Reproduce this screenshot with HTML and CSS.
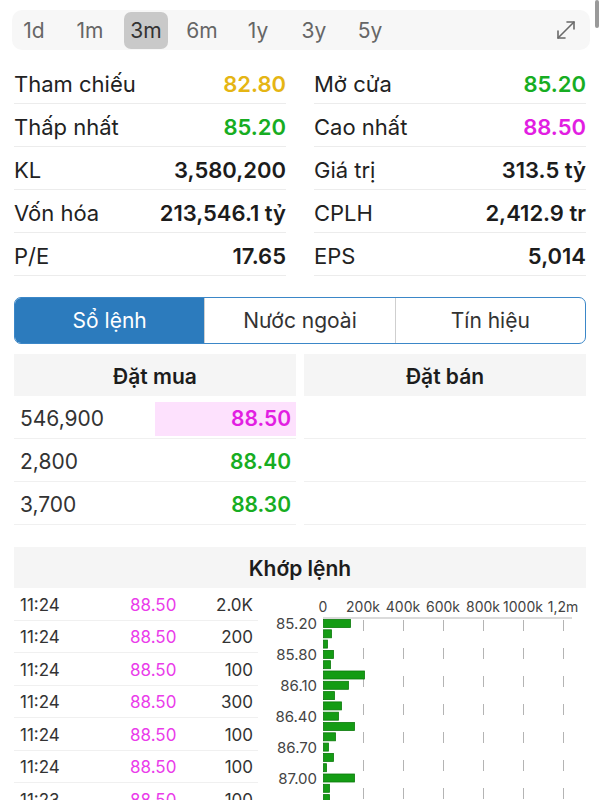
FILE: index.html
```html
<!DOCTYPE html>
<html lang="vi">
<head>
    <meta charset="UTF-8">
    <meta name="viewport" content="width=device-width, initial-scale=1.0">
    <title>Chi tiết cổ phiếu</title>
    <link rel="stylesheet" href="styles.css">
</head>
<body>

<div class="scroll-ind"></div>

<div class="range-bar">
    <span class="range">1d</span>
    <span class="range">1m</span>
    <span class="range active">3m</span>
    <span class="range">6m</span>
    <span class="range">1y</span>
    <span class="range">3y</span>
    <span class="range">5y</span>
    <svg class="expand" viewBox="0 0 24 24" fill="none" stroke="#6a6a6a" stroke-width="1.6" stroke-linecap="round" stroke-linejoin="round">
        <line x1="4" y1="20" x2="20" y2="4"/>
        <polyline points="4,13 4,20 11,20"/>
        <polyline points="13,4 20,4 20,11"/>
    </svg>
</div>

<div class="stats">
    <div class="stat"><span>Tham chiếu</span><span class="val ref">82.80</span></div>
    <div class="stat"><span>Mở cửa</span><span class="val up">85.20</span></div>
    <div class="stat"><span>Thấp nhất</span><span class="val up">85.20</span></div>
    <div class="stat"><span>Cao nhất</span><span class="val ceil">88.50</span></div>
    <div class="stat"><span>KL</span><span class="val">3,580,200</span></div>
    <div class="stat"><span>Giá trị</span><span class="val">313.5 tỷ</span></div>
    <div class="stat"><span>Vốn hóa</span><span class="val">213,546.1 tỷ</span></div>
    <div class="stat"><span>CPLH</span><span class="val">2,412.9 tr</span></div>
    <div class="stat"><span>P/E</span><span class="val">17.65</span></div>
    <div class="stat"><span>EPS</span><span class="val">5,014</span></div>
</div>

<div class="tabs">
    <div class="tab active">Sổ lệnh</div>
    <div class="tab">Nước ngoài</div>
    <div class="tab">Tín hiệu</div>
</div>

<div class="book">
    <div class="book-col">
        <div class="book-head">Đặt mua</div>
        <div class="book-row"><span class="qty">546,900</span><span class="price ceil hl">88.50</span></div>
        <div class="book-row"><span class="qty">2,800</span><span class="price up">88.40</span></div>
        <div class="book-row"><span class="qty">3,700</span><span class="price up">88.30</span></div>
    </div>
    <div class="book-col">
        <div class="book-head">Đặt bán</div>
        <div class="book-row"></div>
        <div class="book-row"></div>
        <div class="book-row"></div>
    </div>
</div>

<div class="match-head">Khớp lệnh</div>

<div class="match">
    <div class="trades">
        <div class="trade"><span class="t-time">11:24</span><span class="t-price">88.50</span><span class="t-vol">2.0K</span></div>
        <div class="trade"><span class="t-time">11:24</span><span class="t-price">88.50</span><span class="t-vol">200</span></div>
        <div class="trade"><span class="t-time">11:24</span><span class="t-price">88.50</span><span class="t-vol">100</span></div>
        <div class="trade"><span class="t-time">11:24</span><span class="t-price">88.50</span><span class="t-vol">300</span></div>
        <div class="trade"><span class="t-time">11:24</span><span class="t-price">88.50</span><span class="t-vol">100</span></div>
        <div class="trade"><span class="t-time">11:24</span><span class="t-price">88.50</span><span class="t-vol">100</span></div>
        <div class="trade"><span class="t-time">11:23</span><span class="t-price">88.50</span><span class="t-vol">100</span></div>
    </div>

    <svg class="vol-chart" width="330" height="212" viewBox="0 0 330 212">
        <g class="axis-text" text-anchor="middle">
            <text x="53" y="24">0</text>
            <text x="93" y="24">200k</text>
            <text x="133" y="24">400k</text>
            <text x="173" y="24">600k</text>
            <text x="213" y="24">800k</text>
            <text x="253" y="24">1000k</text>
            <text x="293" y="24">1,2m</text>
        </g>
        <line x1="53" y1="30" x2="302" y2="30" stroke="#cfcfcf" stroke-width="1.5"/>
        <g stroke="#b4b4b4" stroke-width="1" stroke-dasharray="11 17">
            <line x1="93.5" y1="32" x2="93.5" y2="212"/>
            <line x1="133.5" y1="32" x2="133.5" y2="212"/>
            <line x1="173.5" y1="32" x2="173.5" y2="212"/>
            <line x1="213.5" y1="32" x2="213.5" y2="212"/>
            <line x1="253.5" y1="32" x2="253.5" y2="212"/>
            <line x1="293.5" y1="32" x2="293.5" y2="212"/>
        </g>
        <g class="price-text" text-anchor="end">
            <text x="47" y="41">85.20</text>
            <text x="47" y="72">85.80</text>
            <text x="47" y="103">86.10</text>
            <text x="47" y="134">86.40</text>
            <text x="47" y="165">86.70</text>
            <text x="47" y="196">87.00</text>
        </g>
        <g fill="#149c14" stroke="#0b7a0b" stroke-width="0.8">
            <rect x="53.5" y="31.5" width="27" height="8"/>
            <rect x="53.5" y="41.8" width="8" height="8"/>
            <rect x="53.5" y="52.1" width="4" height="8"/>
            <rect x="53.5" y="62.4" width="10" height="8"/>
            <rect x="53.5" y="72.7" width="7" height="8"/>
            <rect x="53.5" y="83" width="41" height="8"/>
            <rect x="53.5" y="93.3" width="25" height="8"/>
            <rect x="53.5" y="103.6" width="11" height="8"/>
            <rect x="53.5" y="113.9" width="18" height="8"/>
            <rect x="53.5" y="124.2" width="15" height="8"/>
            <rect x="53.5" y="134.5" width="31" height="8"/>
            <rect x="53.5" y="144.8" width="12" height="8"/>
            <rect x="53.5" y="155.1" width="5" height="8"/>
            <rect x="53.5" y="165.4" width="10" height="8"/>
            <rect x="53.5" y="175.7" width="3" height="8"/>
            <rect x="53.5" y="186" width="31" height="8"/>
            <rect x="53.5" y="196.3" width="6" height="8"/>
            <rect x="53.5" y="206.6" width="6" height="8"/>
        </g>
    </svg>
</div>

</body>
</html>
```

FILE: styles.css
```css
/* stock detail screen */
html, body {
    margin: 0;
    height: 800px;
    overflow: hidden;
}

body {
    font-family: Inter, "Noto Sans", sans-serif;
    color: #222;
    background-color: #fff;
}

.scroll-ind {
    position: fixed;
    top: 0;
    right: 1px;
    width: 4px;
    height: 28px;
    border-radius: 2px;
    background-color: #9a9a9a;
}

/* time range selector */
.range-bar {
    display: flex;
    align-items: center;
    gap: 12px;
    height: 40px;
    margin: 10px 10px 0 12px;
    background-color: #f7f7f7;
    border-radius: 10px;
}

.range {
    width: 44px;
    height: 37px;
    display: flex;
    align-items: center;
    justify-content: center;
    font-size: 21px;
    color: #666;
    border-radius: 7px;
}

.range.active {
    background-color: #c9c9c9;
    color: #333;
}

.expand {
    width: 24px;
    height: 24px;
    margin-left: auto;
    margin-right: 12px;
}

/* price stats */
.stats {
    display: grid;
    grid-template-columns: 1fr 1fr;
    column-gap: 28px;
    margin: 11px 14px 0;
}

.stat {
    display: flex;
    justify-content: space-between;
    align-items: center;
    height: 43px;
    padding-top: 3px;
    box-sizing: border-box;
    border-bottom: 1px solid #ececec;
    font-size: 22px;
}

.val {
    font-weight: 600;
    color: #1c1c1c;
}

.ref { color: #e5b514; }
.up { color: #17ad22; }
.ceil { color: #e21ee2; }

/* tabs */
.tabs {
    display: flex;
    height: 47px;
    margin: 21px 14px 0;
    border: 1.5px solid #3b87c8;
    border-radius: 7px;
    overflow: hidden;
    box-sizing: border-box;
}

.tab {
    flex: 1;
    display: flex;
    align-items: center;
    justify-content: center;
    font-size: 21px;
    color: #333;
    border-left: 1px solid #cfcfcf;
}

.tab:first-child {
    border-left: none;
}

.tab.active {
    background-color: #2c7bbd;
    color: #fff;
}

/* order book */
.book {
    display: grid;
    grid-template-columns: 1fr 1fr;
    column-gap: 8px;
    margin: 10px 14px 0;
}

.book-head, .match-head {
    display: flex;
    align-items: center;
    justify-content: center;
    height: 42px;
    padding-top: 2px;
    box-sizing: border-box;
    background-color: #f5f5f5;
    font-size: 21px;
    font-weight: 600;
    color: #1c1c1c;
}

.book-row {
    display: flex;
    align-items: center;
    justify-content: space-between;
    height: 43px;
    padding-top: 3px;
    box-sizing: border-box;
    border-bottom: 1px solid #f0f0f0;
    font-size: 21px;
}

.qty {
    padding-left: 6px;
    color: #333;
}

.price {
    width: 136px;
    height: 34px;
    padding-right: 5px;
    display: flex;
    align-items: center;
    justify-content: flex-end;
    font-weight: 600;
}

.hl {
    background-color: #fde1fd;
}

/* matched trades */
.match-head {
    margin: 22px 14px 0;
    height: 41px;
}

.match {
    display: flex;
    margin-left: 14px;
}

.trades {
    width: 244px;
    flex-shrink: 0;
}

.trade {
    display: flex;
    align-items: center;
    height: 32.5px;
    padding-top: 2px;
    box-sizing: border-box;
    border-bottom: 1px solid #f0f0f0;
    font-size: 17px;
    color: #333;
}

.t-time {
    width: 110px;
    padding-left: 6px;
}

.t-price {
    color: #ea3cea;
}

.t-vol {
    margin-left: auto;
    padding-right: 5px;
}

.vol-chart {
    margin-left: 12px;
    flex-shrink: 0;
}

.axis-text {
    font-size: 14px;
    fill: #444;
}

.price-text {
    font-size: 15px;
    fill: #444;
}
```
